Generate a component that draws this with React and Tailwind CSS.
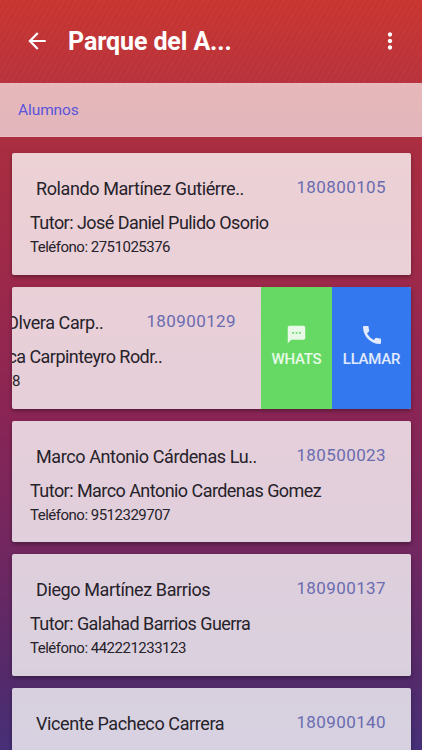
import { MdArrowBack, MdMoreVert, MdSms, MdCall } from 'react-icons/md'

const alumnos = [
  { name: 'Rolando Martínez Gutiérre..', id: '180800105', tutor: 'Tutor: José Daniel Pulido Osorio', phone: 'Teléfono: 2751025376' },
  { name: 'Juan Francisco Olvera Carp..', id: '180900129', tutor: 'Tutor: Ana Angélica Carpinteyro Rodr..', phone: 'Teléfono: 2751025378', swiped: true },
  { name: 'Marco Antonio Cárdenas Lu..', id: '180500023', tutor: 'Tutor: Marco Antonio Cardenas Gomez', phone: 'Teléfono: 9512329707' },
  { name: 'Diego Martínez Barrios', id: '180900137', tutor: 'Tutor: Galahad Barrios Guerra', phone: 'Teléfono: 442221233123' },
  { name: 'Vicente Pacheco Carrera', id: '180900140', tutor: '', phone: '' },
]

function AlumnoCard({ alumno }) {
  return (
    <div className="flex h-[121.75px] shrink-0 overflow-hidden rounded-[2px] bg-white/[0.78] shadow-[0_2px_4px_rgba(0,0,0,0.35)]">
      <div className={`w-[399px] shrink-0 pt-[24px] pl-[18px] pr-[25px] ${alumno.swiped ? '-ml-[150px]' : ''}`}>
        <div className="flex items-center justify-between pl-[6px]">
          <span className="whitespace-nowrap text-[18px] leading-[24px] tracking-[-0.4px] text-[#26222a]">{alumno.name}</span>
          <span className="-mt-[4px] text-[17px] leading-[24px] tracking-[0.4px] text-[#6a6cb0]">{alumno.id}</span>
        </div>
        <p className="mt-[10px] whitespace-nowrap text-[18px] leading-[24px] tracking-[-0.55px] text-[#26222a]">{alumno.tutor}</p>
        <p className="mt-[1px] text-[15px] leading-[22px] tracking-[-0.5px] text-[#26222a]">{alumno.phone}</p>
      </div>
      {alumno.swiped && (
        <div className="flex shrink-0 text-[15px] font-medium tracking-[-0.25px] text-white/85">
          <div className="flex w-[71px] flex-col items-center justify-center bg-[#66d964] pb-[2px]">
            <MdSms size={21} />
            <span className="mt-[3px] leading-[22px]">WHATS</span>
          </div>
          <div className="flex w-[79px] flex-col items-center justify-center bg-[#3478f0] pb-[2px]">
            <MdCall size={24} />
            <span className="mt-[1px] leading-[22px]">LLAMAR</span>
          </div>
        </div>
      )}
    </div>
  )
}

export default function App() {
  return (
    <div className="flex h-[750px] flex-col overflow-hidden bg-[linear-gradient(180deg,#c9352f_0%,#b8323c_11%,#a92d41_20%,#9c294b_38%,#8a2555_55%,#722760_73%,#542a6a_90%,#473078_100%)] font-['Roboto',sans-serif]">
      <header className="flex h-[83px] shrink-0 items-center bg-[repeating-linear-gradient(120deg,rgba(255,255,255,0.018)_0px,rgba(255,255,255,0.018)_2px,transparent_2px,transparent_5px)] pl-[24px] pr-[19px] text-white">
        <MdArrowBack size={26} className="-mt-[1px]" />
        <h1 className="ml-[18px] text-[25px] font-bold tracking-[-0.1px]">Parque del A...</h1>
        <MdMoreVert size={26} className="ml-auto -mt-[2px]" />
      </header>
      <div className="flex h-[54px] shrink-0 items-center border-y border-white/10 bg-white/65 pl-[18px] pt-[1px] text-[15.5px] tracking-[-0.1px] text-[#5a55dc]">Alumnos</div>
      <main className="flex flex-col gap-[12px] pl-[12px] pr-[11px] pt-[16px]">
        {alumnos.map((alumno) => (
          <AlumnoCard key={alumno.id} alumno={alumno} />
        ))}
      </main>
    </div>
  )
}
